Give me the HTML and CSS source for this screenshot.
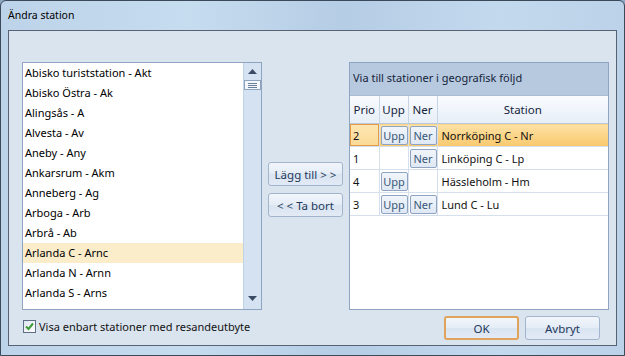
FILE: index.html
```html
<!DOCTYPE html>
<html lang="sv">
<head>
<meta charset="utf-8">
<title>Ändra station</title>
<link rel="stylesheet" href="styles.css">
</head>
<body>
<div class="window">
  <div class="titlebar"><span class="title">Ändra station</span></div>
  <div class="client">
    <div class="listbox">
      <ul class="items">
        <li>Abisko turiststation - Akt</li>
        <li>Abisko Östra - Ak</li>
        <li>Alingsås - A</li>
        <li>Alvesta - Av</li>
        <li>Aneby - Any</li>
        <li>Ankarsrum - Akm</li>
        <li>Anneberg - Ag</li>
        <li>Arboga - Arb</li>
        <li>Arbrå - Ab</li>
        <li class="hot">Arlanda C - Arnc</li>
        <li>Arlanda N - Arnn</li>
        <li>Arlanda S - Arns</li>
        <li class="partial">Arvika - Ar</li>
      </ul>
      <div class="scrollbar">
        <svg class="arrow" width="9" height="5" viewBox="0 0 9 5"><path d="M0 5 L4.5 0 L9 5 Z" fill="#3b4b63"/></svg>
        <div class="thumb"><span></span><span></span><span></span></div>
        <div class="spacer"></div>
        <svg class="arrow" width="9" height="5" viewBox="0 0 9 5"><path d="M0 0 L4.5 5 L9 0 Z" fill="#3b4b63"/></svg>
      </div>
    </div>
    <div class="middle">
      <button class="btn">Lägg till &gt; &gt;</button>
      <button class="btn">&lt; &lt; Ta bort</button>
    </div>
    <div class="panel">
      <div class="panel-head">Via till stationer i geografisk följd</div>
      <table class="grid">
        <colgroup><col class="c-prio"><col class="c-upp"><col class="c-ner"><col></colgroup>
        <thead>
          <tr><th>Prio</th><th>Upp</th><th>Ner</th><th>Station</th></tr>
        </thead>
        <tbody>
          <tr class="sel"><td class="cur">2</td><td><span class="mini">Upp</span></td><td><span class="mini">Ner</span></td><td>Norrköping C - Nr</td></tr>
          <tr><td>1</td><td></td><td><span class="mini">Ner</span></td><td>Linköping C - Lp</td></tr>
          <tr><td>4</td><td><span class="mini">Upp</span></td><td></td><td>Hässleholm - Hm</td></tr>
          <tr><td>3</td><td><span class="mini">Upp</span></td><td><span class="mini">Ner</span></td><td>Lund C - Lu</td></tr>
        </tbody>
      </table>
    </div>
    <label class="check">
      <span class="box"><svg width="9" height="9" viewBox="0 0 9 9"><path d="M1 4.5 L3.5 7 L8 1.5" fill="none" stroke="#3f9a3a" stroke-width="2"/></svg></span>
      Visa enbart stationer med resandeutbyte
    </label>
    <div></div>
    <div class="actions">
      <button class="btn ok">OK</button>
      <button class="btn">Avbryt</button>
    </div>
  </div>
</div>
</body>
</html>
```

FILE: styles.css
```css
html, body {
  margin: 0;
  padding: 0;
  width: 625px;
  height: 356px;
  overflow: hidden;
  background: #8ea9c6;
  font-family: "Noto Sans", "Open Sans", "Liberation Sans", sans-serif;
  font-size: 11px;
  color: #000;
}

.window {
  box-sizing: border-box;
  width: 625px;
  height: 356px;
  border: 1px solid #3b4a5b;
  border-radius: 6px 6px 0 0;
  background: linear-gradient(90deg, #bcd3e9 0%, #c6dcef 30%, #b5cde5 55%, #c3d9ee 80%, #bcd2e8 100%);
  padding: 0 7px 9px 7px;
  display: flex;
  flex-direction: column;
}

.titlebar {
  height: 29px;
  display: flex;
  align-items: center;
}

.title {
  font-size: 10.5px;
  color: #000;
  position: relative;
  top: -1px;
}

.client {
  flex: 1;
  background: #dae4ef;
  border: 1px solid #556375;
  display: grid;
  grid-template-columns: 240px 75px 260px;
  grid-template-rows: 248px auto;
  column-gap: 6px;
  padding: 31px 0 0 13px;
}

/* list box */
.listbox {
  border: 1px solid #8ea4c0;
  background: #fff;
  display: flex;
  overflow: hidden;
}

.items {
  list-style: none;
  margin: 0;
  padding: 0;
  flex: 1;
  overflow: hidden;
}

.items li {
  height: 20px;
  line-height: 20px;
  padding-left: 2px;
  white-space: nowrap;
}

.items li.partial {
  height: 6px;
  overflow: hidden;
}

.items li.hot {
  background: #fbecca;
}

.scrollbar {
  width: 18px;
  background: #d5e2f1;
  border-left: 1px solid #c3d3e6;
  display: flex;
  flex-direction: column;
  align-items: center;
  padding: 6px 0 8px;
  box-sizing: border-box;
}

.thumb {
  margin-top: 6px;
  width: 15px;
  height: 8px;
  border: 1px solid #8ea3bf;
  background: #f3f7fc;
  display: flex;
  flex-direction: column;
  justify-content: center;
  gap: 1px;
  align-items: center;
}

.thumb span {
  display: block;
  width: 9px;
  height: 1px;
  background: #6b7f99;
}

.spacer { flex: 1; }

/* middle buttons */
.middle {
  display: flex;
  flex-direction: column;
  gap: 7px;
  padding-top: 100px;
}

.btn {
  font: inherit;
  font-size: 11.5px;
  height: 24px;
  width: 75px;
  padding: 0;
  border: 1px solid #a3b5cc;
  border-radius: 3px;
  background: linear-gradient(180deg, #f2f6fb 0%, #e4ecf6 50%, #d9e4f1 51%, #e2eaf5 100%);
  color: #1e395b;
}

/* right panel */
.panel {
  border: 1px solid #8ea4c0;
  background: #fff;
  display: flex;
  flex-direction: column;
}

.panel-head {
  height: 32px;
  line-height: 30px;
  background: #b6c9df;
  border-bottom: 1px solid #a9bcd4;
  padding-left: 3px;
  color: #15243a;
}

.grid {
  border-collapse: collapse;
  table-layout: fixed;
  width: 258px;
  font-size: inherit;
}

.c-prio { width: 29px; }
.c-upp { width: 29px; }
.c-ner { width: 29px; }

.grid th {
  font-weight: normal;
  font-size: 11.5px;
  height: 27px;
  background: linear-gradient(180deg, #f9fbfe 0%, #e7eef7 100%);
  border-right: 1px solid #c6d4e4;
  border-bottom: 1px solid #b9c9dc;
  color: #15243a;
  padding: 0;
}

.grid th:last-child { border-right: none; }

.grid td {
  height: 22px;
  border-right: 1px solid #d6e0ec;
  border-bottom: 1px solid #d6e0ec;
  padding: 0 0 0 3px;
  white-space: nowrap;
  overflow: hidden;
  color: #111;
}

.grid td:nth-child(2),
.grid td:nth-child(3) {
  padding: 0 0 0 1px;
}

.grid td:last-child { border-right: none; padding-left: 4px; }

.grid tr.sel td {
  background: linear-gradient(180deg, #fde2a6 0%, #fbd588 50%, #f9c86e 100%);
}

.grid tr.sel td.cur {
  box-shadow: inset 0 0 0 1px #e59a44;
  background: linear-gradient(180deg, #fde6b2 0%, #fbd996 100%);
}

.mini {
  display: inline-block;
  box-sizing: border-box;
  width: 27px;
  text-align: center;
  height: 19px;
  line-height: 17px;
  border: 1px solid #8ea4c0;
  border-radius: 2px;
  background: linear-gradient(180deg, #f1f5fb 0%, #dfe8f4 100%);
  color: #3a5878;
  vertical-align: middle;
}

/* bottom row */
.check {
  display: flex;
  align-items: center;
  gap: 3px;
  margin-top: 9px;
  margin-left: 1px;
  height: 14px;
  white-space: nowrap;
  color: #111;
  font-size: 11px;
}

.box {
  box-sizing: border-box;
  width: 13px;
  height: 13px;
  border: 1px solid #5d6e86;
  background: linear-gradient(135deg, #dfe6ef, #ffffff);
  display: flex;
  align-items: center;
  justify-content: center;
}

.actions {
  display: flex;
  justify-content: flex-end;
  gap: 6px;
  padding-right: 9px;
  margin-top: 6px;
}

.actions .btn.ok {
  border: 2px solid #e0a35c;
}
```
